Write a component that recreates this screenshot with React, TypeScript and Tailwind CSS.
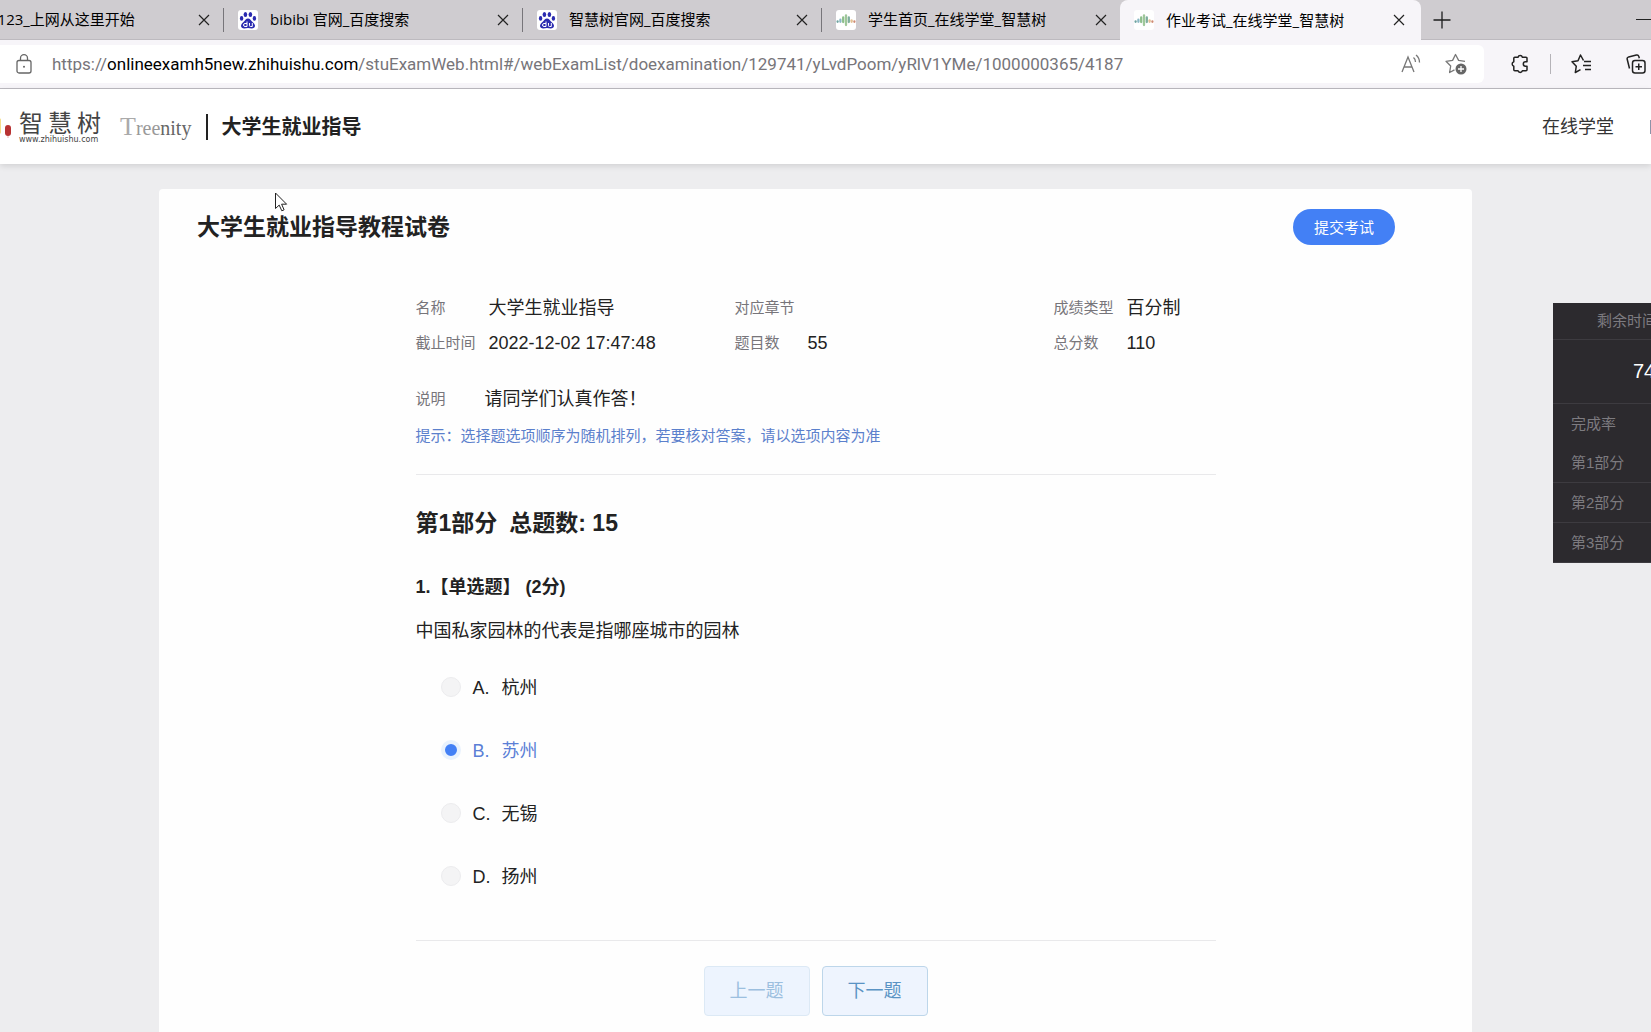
const ui = "font-['Open_Sans','Noto_Sans_CJK_SC',sans-serif]"

const tabs = [
  { title: 'hao123_上网从这里开始', icon: 'none' },
  { title: 'bibibi 官网_百度搜索', icon: 'baidu' },
  { title: '智慧树官网_百度搜索', icon: 'baidu' },
  { title: '学生首页_在线学堂_智慧树', icon: 'tree' },
  { title: '作业考试_在线学堂_智慧树', icon: 'tree', active: true },
]

const info = [
  ['名称', '大学生就业指导'],
  ['对应章节', ''],
  ['成绩类型', '百分制'],
  ['截止时间', '2022-12-02 17:47:48'],
  ['题目数', '55'],
  ['总分数', '110'],
]

const options = [
  { key: 'A', text: '杭州' },
  { key: 'B', text: '苏州' },
  { key: 'C', text: '无锡' },
  { key: 'D', text: '扬州' },
]

function BaiduIcon() {
  return (
    <svg viewBox="0 0 20 20" className="size-5 shrink-0">
      <rect width="20" height="20" rx="3" fill="#fff" />
      <g fill="#2b2bb0">
        <ellipse cx="3.6" cy="8.4" rx="1.7" ry="2.3" />
        <ellipse cx="7.4" cy="4.6" rx="1.8" ry="2.5" />
        <ellipse cx="12.4" cy="4.6" rx="1.8" ry="2.5" />
        <ellipse cx="16.4" cy="8.4" rx="1.7" ry="2.3" />
        <path d="M10 8.400c2 0 2.700 1.600 4 3 1.400 1.500 3 2.600 3 4.400 0 1.700-1.600 2.600-3.200 2.600-1.400 0-2.400-.4-3.800-.4s-2.400.4-3.800.4C4.600 18.400 3 17.500 3 15.800c0-1.800 1.600-2.900 3-4.400 1.300-1.400 2-3 4-3z" />
      </g>
      <path d="M9 11.500v5H7a1.500 1.500 0 010-3h2M11.500 13v2.700c0 .6.400.8.900.8h1.900V13" fill="none" stroke="#fff" />
    </svg>
  )
}

function TreeIcon() {
  return (
    <svg viewBox="0 0 20 20" className="size-5 shrink-0">
      <rect width="20" height="20" rx="3" fill="#fff" />
      <g strokeWidth="2.3" strokeLinecap="round">
        <path d="M1.600 11.500v.3" stroke="#6fa3a0" />
        <path d="M4.400 9.700v2.100" stroke="#8ab8c4" />
        <path d="M7.200 7.500v4.500" stroke="#8dbf8a" />
        <path d="M10 5.500v9.500" stroke="#9fc79a" />
        <path d="M12.800 7.500v4.500" stroke="#7fae9c" />
        <path d="M15.600 10.300v1.500" stroke="#e3c193" />
        <path d="M18.400 11.500v.3" stroke="#cf8a74" />
      </g>
    </svg>
  )
}

function CloseIcon() {
  return (
    <svg viewBox="0 0 12 12" className="size-3" fill="none" stroke="#222" strokeWidth="1.2">
      <path d="M1 1l10 10M11 1L1 11" />
    </svg>
  )
}

function TabBar() {
  return (
    <div className="flex h-10 overflow-hidden bg-[#cfccd0]">
      <div className="-ml-[75px] flex shrink-0">
        {tabs.map((tab, i) => (
          <div
            key={tab.title}
            className={
              tab.active
                ? '-ml-px flex w-[301px] items-center rounded-t-lg bg-[#f7f5f9] pr-4 pl-[14px]'
                : 'flex w-[299px] items-center border-b border-[#bdbabf] pr-[14px] pl-[14px]'
            }
          >
            {tab.icon === 'baidu' && <BaiduIcon />}
            {tab.icon === 'tree' && <TreeIcon />}
            {tab.icon === 'none' && <span className="w-5 shrink-0" />}
            <span className="ml-3 flex-1 truncate text-[15px] text-black">{tab.title}</span>
            <button aria-label="关闭标签页"><CloseIcon /></button>
            {i < 3 && <span className="-mr-[14px] ml-[13px] h-6 w-px bg-[#77757a]" />}
          </div>
        ))}
      </div>
      <div className="flex flex-1 items-center justify-between border-b border-[#bdbabf] pl-3">
        <button aria-label="新建标签页">
          <svg viewBox="0 0 18 18" className="size-[18px]" fill="none" stroke="#1d1d1d" strokeWidth="1.3">
            <path d="M9 .5v17M.5 9h17" />
          </svg>
        </button>
        <button aria-label="最小化" className="h-px w-[15px] bg-[#222]" />
      </div>
    </div>
  )
}

function AddressBar() {
  return (
    <div className="flex h-[49px] items-center border-b border-[#bcbac0] bg-[#f7f5f9] pb-px">
      <div className="flex h-[38px] min-w-0 flex-1 items-center rounded-r-md bg-white pr-[17px] pl-4">
        <svg viewBox="0 0 16 20" className="h-5 w-4 shrink-0" fill="none" stroke="#666" strokeWidth="1.3">
          <rect x="1" y="6.500" width="14" height="12.500" rx="2" />
          <path d="M4.500 6.500V4.200a3.500 3.500 0 017 0v2.300" />
          <circle cx="8" cy="12.800" r="1" fill="#666" stroke="none" />
        </svg>
        <div role="textbox" aria-label="地址" className="ml-5 min-w-0 flex-1 truncate font-[Roboto,sans-serif] text-[17px] leading-6 text-[#77757a]">
          https://<span className="text-black">onlineexamh5new.zhihuishu.com</span>
          /stuExamWeb.html#/webExamList/doexamination/129741/yLvdPoom/yRlV1YMe/1000000365/4187
        </div>
        <button aria-label="大声朗读">
          <svg viewBox="0 0 20 20" className="size-5" fill="none" stroke="#777" strokeWidth="1.300">
            <path d="M1 18L7 3l6 15M3 13h8" />
            <path d="M12.500 3.500c1.300 1 2 2.600 2 4.500M15 1c2.200 1.700 3.500 4.200 3.500 7.500" />
          </svg>
        </button>
        <button aria-label="收藏此页" className="ml-6">
          <svg viewBox="0 0 22 22" className="size-[22px]" fill="none" stroke="#777" strokeWidth="1.300" strokeLinejoin="round">
            <path d="M20 8.300l-6.400-.9L10.500 1.500 7.600 7.400 1 8.300l4.700 4.700-1.100 6.500 4.900-2.600" />
            <circle cx="16" cy="16" r="5.500" fill="#666" stroke="none" />
            <path d="M16 13v6M13 16h6" stroke="#fff" />
          </svg>
        </button>
      </div>
      <div className="flex shrink-0 items-center pl-[26px]">
        <button aria-label="扩展">
          <svg viewBox="0 0 20 20" className="size-5" fill="none" stroke="#222" strokeWidth="1.500" strokeLinejoin="round">
            <path d="M8 3.200a2.300 2.300 0 014.400 0H16a1 1 0 011 1v3.600h-1.500a2.200 2.200 0 000 4.400H17v3.600a1 1 0 01-1 1h-3.600a2.300 2.300 0 01-4.400 0H4.800a1 1 0 01-1-1v-3.600a2.300 2.300 0 010-4.400V4.200a1 1 0 011-1z" />
          </svg>
        </button>
        <span className="ml-5 h-5 w-px bg-[#b5b3b8]" />
        <button aria-label="收藏夹" className="ml-5">
          <svg viewBox="0 0 20 20" className="size-5" fill="none" stroke="#222" strokeWidth="1.500" strokeLinejoin="round">
            <path d="M12.500 6.500L9.500 1 7 6.800l-6 .9 4.300 4.500-1 6.300 5.200-2.800M13 7.500h7M12 11.500h8M14 15.500h6" />
          </svg>
        </button>
        <button aria-label="集锦" className="mr-[5px] ml-[35px]">
          <svg viewBox="0 0 20 20" className="size-5" fill="none" stroke="#222" strokeWidth="1.500" strokeLinejoin="round">
            <path d="M3.500 14.500L1.200 5.300a2 2 0 011.400-2.400l7.800-1.900a2 2 0 012.400 1.400l.5 1.800" />
            <rect x="6.500" y="6.500" width="12.500" height="12.500" rx="2.500" />
            <path d="M12.750 9.500v6.500M9.500 12.750H16" />
          </svg>
        </button>
      </div>
    </div>
  )
}

function SiteHeader() {
  return (
    <header className="flex h-[75px] items-center bg-white shadow-[0_2px_6px_rgba(0,0,0,0.12)]">
      <svg viewBox="0 0 12 22" className="h-[22px] w-3 shrink-0">
        <rect x="-4" y="2" width="5" height="16" rx="2" fill="#f5dd8a" />
        <path d="M8 20v2" stroke="#e8b5b0" />
        <rect x="5" y="9" width="6" height="11" rx="3" fill="#b83232" />
      </svg>
      <a href="#" className="ml-[7px] flex flex-col pt-0.5 text-[#444]">
        <span className="flex gap-[5px] text-[24px] leading-6">
          <span>智</span><span>慧</span><span>树</span>
        </span>
        <span className="font-['DejaVu_Sans',sans-serif] text-[8px] leading-2">www.zhihuishu.com</span>
      </a>
      <span className="ml-[19px] font-['Liberation_Serif',serif] text-[20px] text-[#666]">
        <span className="text-[26px] text-[#aaa]">T</span><span className="text-[#999]">ree</span>nity
      </span>
      <span className="ml-[15px] h-[26px] w-0.5 bg-[#222]" />
      <h2 className="ml-[13px] text-[20px] leading-7 font-bold text-[#222]">大学生就业指导</h2>
      <a href="#" className="mt-0.5 ml-auto text-[18px] text-[#333]">在线学堂</a>
      <span className="ml-[36px] h-[14px] w-px bg-[#8d93a8]" />
    </header>
  )
}

function TimerPanel() {
  return (
    <aside className="absolute top-[303px] right-0 w-[98px] overflow-hidden bg-[#2c2a2e] text-[15px] whitespace-nowrap text-[#7d7b80]">
      <div className="h-[37px] border-b border-[#3d3b40] pl-11 leading-9">剩余时间</div>
      <div className="h-16 border-b border-[#3d3b40] pl-20 text-[20px] leading-[62px] font-medium text-white">74</div>
      <div className="pl-[18px] leading-[39px]">完成率</div>
      <div className="border-b border-[#3d3b40] pl-[18px] leading-[39px]">第1部分</div>
      <div className="border-b border-[#3d3b40] pl-[18px] leading-[39px]">第2部分</div>
      <div className="border-b border-[#3d3b40] pl-[18px] leading-[39px]">第3部分</div>
    </aside>
  )
}

function Exam() {
  return (
    <main className="mt-[25px] mr-[179px] ml-[159px] flex-1 rounded-t-sm bg-[#fefefe] text-[#222]">
      <div className="flex items-center justify-between pt-5 pr-[77px] pl-[38px]">
        <h1 className="text-[23px] leading-9 font-bold">大学生就业指导教程试卷</h1>
        <button className="h-9 rounded-full bg-[#4380f5] px-[21px] pt-0.5 text-[15px] text-white">提交考试</button>
      </div>
      <div className="mx-auto max-w-[800px]">
        <dl className="grid grid-cols-[319px_319px_1fr] pt-[46px]">
          {info.map(([label, value]) => (
            <div key={label} className="flex h-[35px] items-center">
              <dt className="w-[73px] text-[15px] text-[#77757a]">{label}</dt>
              <dd className="text-[18px]">{value}</dd>
            </div>
          ))}
        </dl>
        <div className="mt-[21px] flex h-[35px] items-center">
          <span className="w-[69px] text-[15px] text-[#77757a]">说明</span>
          <span className="text-[18px]">请同学们认真作答！</span>
        </div>
        <p className="pt-[7px] pb-[26px] text-[15px] leading-6 text-[#5b80cc]">
          提示：选择题选项顺序为随机排列，若要核对答案，请以选项内容为准
        </p>
        <section className="border-y border-[#e9e9eb] pt-8">
          <h2 className="text-[23px] leading-8 font-bold">
            第1部分<span className="ml-3">总题数: 15</span>
          </h2>
          <h3 className="mt-8 text-[18px] leading-8 font-bold">1.【单选题】 (2分)</h3>
          <p className="mt-3 text-[18px] leading-8">中国私家园林的代表是指哪座城市的园林</p>
          <div className="mt-[10px] mb-[31px]">
            {options.map((o) => (
              <label key={o.key} className="flex h-[63px] items-center pl-[25px] text-[18px] has-checked:text-[#5b7fd6]">
                <input
                  type="radio"
                  name="answer"
                  defaultChecked={o.key === 'B'}
                  className="mb-1 size-5 appearance-none rounded-full border border-[#ececee] bg-[#f4f4f5] checked:border-4 checked:border-[#e9f2fd] checked:bg-[#4380f5]"
                />
                <span className="ml-3 w-[29px]">{o.key}.</span>
                <span>{o.text}</span>
              </label>
            ))}
          </div>
        </section>
        <div className="flex justify-center gap-3 pt-[25px] pb-4 text-[18px]">
          <button disabled className="h-[50px] w-[106px] rounded border border-[#dce9f5] bg-[#edf4fe] text-[#9cbfdf]">上一题</button>
          <button className="h-[50px] w-[106px] rounded border border-[#bdd6ea] bg-[#eef4fe] text-[#5a93c4]">下一题</button>
        </div>
      </div>
    </main>
  )
}

export default function App() {
  return (
    <div lang="zh-CN" className="relative flex min-h-screen flex-col overflow-hidden bg-[#ededef] font-['Liberation_Sans','Noto_Sans_CJK_SC',sans-serif]">
      <div className={ui}>
        <TabBar />
        <AddressBar />
      </div>
      <SiteHeader />
      <Exam />
      <TimerPanel />
      {/* mouse pointer */}
      <svg viewBox="0 0 13 20" className="absolute top-[192px] left-[275px] h-5 w-[13px]" fill="#fff" stroke="#222">
        <path d="M.5 1v15.500l3.700-3.400 2.600 5.700 2.300-1-2.500-5.600h5z" />
      </svg>
    </div>
  )
}
